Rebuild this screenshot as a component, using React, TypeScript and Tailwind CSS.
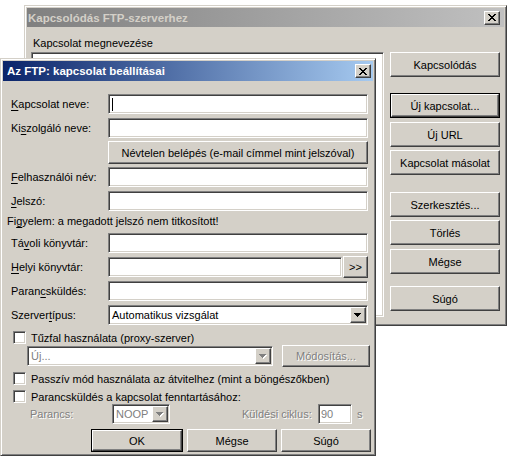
import React from "react";

const RAISED =
  "border border-t-white border-l-white border-r-[#404040] border-b-[#404040] shadow-[inset_-1px_-1px_#808080]";
const SUNKEN =
  "border border-t-[#808080] border-l-[#808080] border-r-white border-b-white shadow-[inset_1px_1px_#404040,inset_-1px_-1px_#d4d0c8] p-px";
const FRAME =
  "border border-t-[#d4d0c8] border-l-[#d4d0c8] border-r-[#404040] border-b-[#404040] shadow-[inset_1px_1px_#fff,inset_-1px_-1px_#808080]";
const DIS = "text-[#808080] [text-shadow:1px_1px_0_#fff]";

function CloseGlyph() {
  return (
    <svg width="8" height="7" viewBox="0 0 8 7" shapeRendering="crispEdges" fill="#000">
      <rect x="0" y="0" width="2" height="1" />
      <rect x="6" y="0" width="2" height="1" />
      <rect x="1" y="1" width="2" height="1" />
      <rect x="5" y="1" width="2" height="1" />
      <rect x="2" y="2" width="4" height="1" />
      <rect x="3" y="3" width="2" height="1" />
      <rect x="2" y="4" width="4" height="1" />
      <rect x="1" y="5" width="2" height="1" />
      <rect x="5" y="5" width="2" height="1" />
      <rect x="0" y="6" width="2" height="1" />
      <rect x="6" y="6" width="2" height="1" />
    </svg>
  );
}

function ArrowGlyph({ disabled = false }: { disabled?: boolean }) {
  const c = disabled ? "#808080" : "#000";
  const tri = (dx: number, dy: number, fill: string) => (
    <g fill={fill}>
      <rect x={0 + dx} y={0 + dy} width="7" height="1" />
      <rect x={1 + dx} y={1 + dy} width="5" height="1" />
      <rect x={2 + dx} y={2 + dy} width="3" height="1" />
      <rect x={3 + dx} y={3 + dy} width="1" height="1" />
    </g>
  );
  return (
    <svg width="8" height="5" viewBox="0 0 8 5" shapeRendering="crispEdges">
      {disabled && tri(1, 1, "#fff")}
      {tri(0, 0, c)}
    </svg>
  );
}

function TitleBar({
  title,
  active,
  className,
}: {
  title: string;
  active: boolean;
  className: string;
}) {
  return (
    <div
      className={`flex items-center shrink-0 ${className} ${
        active
          ? "bg-[linear-gradient(to_right,#0a246a,#a6caf0)] text-white"
          : "bg-[linear-gradient(to_right,#808080,#c0c0c0)] text-[#d4d0c8]"
      }`}
    >
      <span className="flex-1 font-bold text-[11.5px] leading-[14px] whitespace-nowrap">{title}</span>
      <div className={`${RAISED} bg-[#d4d0c8] w-[16px] h-[14px] flex items-center justify-center`}>
        <CloseGlyph />
      </div>
    </div>
  );
}

function Btn({
  children,
  className = "",
  disabled = false,
  def = false,
}: {
  children: React.ReactNode;
  className?: string;
  disabled?: boolean;
  def?: boolean;
}) {
  const inner = (
    <div
      className={`${RAISED} bg-[#d4d0c8] flex items-center justify-center w-full h-full whitespace-nowrap ${
        disabled ? DIS : ""
      }`}
    >
      {children}
    </div>
  );
  if (def) return <div className={`border border-black flex ${className}`}>{inner}</div>;
  return <div className={`flex ${className}`}>{inner}</div>;
}

function Check({ label, className = "" }: { label: React.ReactNode; className?: string }) {
  return (
    <div className={`flex items-center h-[13px] ml-[10px] ${className}`}>
      <div className={`${SUNKEN} w-[13px] h-[13px] bg-white shrink-0`} />
      <span className="ml-[5px] whitespace-nowrap">{label}</span>
    </div>
  );
}

function Combo({
  text,
  className = "",
  disabled = false,
}: {
  text: string;
  className?: string;
  disabled?: boolean;
}) {
  return (
    <div className={`${SUNKEN} bg-white flex items-center h-[20px] ${className}`}>
      <span className={`flex-1 pl-[2px] whitespace-nowrap overflow-hidden ${disabled ? "text-[#808080]" : ""}`}>
        {text}
      </span>
      <div className={`${RAISED} bg-[#d4d0c8] w-[16px] h-[16px] flex items-center justify-center shrink-0`}>
        <ArrowGlyph disabled={disabled} />
      </div>
    </div>
  );
}

function Row({
  label,
  className = "",
  children,
}: {
  label: React.ReactNode;
  className?: string;
  children: React.ReactNode;
}) {
  return (
    <div className={`flex items-center ${className}`}>
      <div className="w-[105px] pl-[8px] whitespace-nowrap">{label}</div>
      {children}
    </div>
  );
}

function U({ c }: { c: string }) {
  return <span className="underline underline-offset-[2px]">{c}</span>;
}

function Input({ className = "", children }: { className?: string; children?: React.ReactNode }) {
  return <div className={`${SUNKEN} bg-white h-[20px] flex items-center ${className}`}>{children}</div>;
}

function BgWindow() {
  return (
    <div
      className={`absolute left-[24px] top-[5px] w-[483px] h-[321px] bg-[#d4d0c8] ${FRAME} p-[2px] flex flex-col`}
    >
      <TitleBar title="Kapcsolódás FTP-szerverhez" active={false} className="h-[19px] pl-[1px] pr-[4px]" />
      <div className="flex">
        <div className="ml-[4px] w-[353px] flex flex-col pt-[9px]">
          <div className="pl-[2px] h-[14px] whitespace-nowrap">Kapcsolat megnevezése</div>
          <div className={`${SUNKEN} bg-white mt-[2px] h-[265px]`} />
        </div>
        <div className="ml-[6px] w-[110px] flex flex-col pt-[25px]">
          <Btn className="h-[25px]">Kapcsolódás</Btn>
          <Btn def className="h-[25px] mt-[16px]">Új kapcsolat...</Btn>
          <Btn className="h-[25px] mt-[4px]">Új URL</Btn>
          <Btn className="h-[25px] mt-[3px]">Kapcsolat másolat</Btn>
          <Btn className="h-[25px] mt-[17px]">Szerkesztés...</Btn>
          <Btn className="h-[25px] mt-[3px]">Törlés</Btn>
          <Btn className="h-[25px] mt-[4px]">Mégse</Btn>
          <Btn className="h-[25px] mt-[12px]">Súgó</Btn>
        </div>
      </div>
    </div>
  );
}

function FrontWindow() {
  return (
    <div
      className={`absolute left-0 top-[58px] w-[376px] h-[398px] bg-[#d4d0c8] ${FRAME} p-[2px] flex flex-col`}
    >
      <TitleBar title="Az FTP: kapcsolat beállításai" active className="h-[20px] pl-[4px] pr-[2px]" />
      <div className="flex flex-col">
        <Row className="h-[20px] mt-[13px]" label={<><U c="K" />apcsolat neve:</>}>
          <Input className="w-[260px]">
            <span className="ml-[2px] w-px h-[13px] bg-black" />
          </Input>
        </Row>
        <Row className="h-[20px] mt-[4px]" label={<>Ki<U c="s" />zolgáló neve:</>}>
          <Input className="w-[260px]" />
        </Row>
        <div className="flex mt-[3px] h-[23px]">
          <Btn className="ml-[105px] w-[260px] h-[23px]">Névtelen belépés (e-mail címmel mint jelszóval)</Btn>
        </div>
        <Row className="h-[20px] mt-[3px]" label={<><U c="F" />elhasználói név:</>}>
          <Input className="w-[260px]" />
        </Row>
        <Row className="h-[20px] mt-[4px]" label={<><U c="J" />elszó:</>}>
          <Input className="w-[260px]" />
        </Row>
        <div className="h-[14px] mt-[3px] pl-[4px] whitespace-nowrap">
          Fi<U c="g" />yelem: a megadott jelszó nem titkosított!
        </div>
        <Row className="h-[20px] mt-[5px]" label={<>Tá<U c="v" />oli könyvtár:</>}>
          <Input className="w-[260px]" />
        </Row>
        <Row className="h-[22px] mt-[3px]" label={<><U c="H" />elyi könyvtár:</>}>
          <Input className="w-[234px]" />
          <Btn className="ml-[1px] w-[25px] h-[22px]">&gt;&gt;</Btn>
        </Row>
        <Row className="h-[20px] mt-[3px]" label={<>Paran<U c="c" />sküldés:</>}>
          <Input className="w-[260px]" />
        </Row>
        <Row className="h-[20px] mt-[4px]" label={<>Szerver<U c="t" />ípus:</>}>
          <Combo text="Automatikus vizsgálat" className="w-[260px]" />
        </Row>
        <Check className="mt-[6px]" label="Tűzfal használata (proxy-szerver)" />
        <div className="flex items-center h-[22px] mt-[1px]">
          <Combo disabled text="Új..." className="ml-[24px] w-[246px]" />
          <Btn disabled className="ml-[9px] w-[88px] h-[22px]">Módosítás...</Btn>
        </div>
        <Check className="mt-[5px]" label="Passzív mód használata az átvitelhez (mint a böngészőkben)" />
        <Check className="mt-[5px]" label="Parancsküldés a kapcsolat fenntartásához:" />
        <div className="flex items-center h-[20px] mt-[1px]">
          <span className={`ml-[27px] w-[82px] ${DIS}`}>Parancs:</span>
          <Combo disabled text="NOOP" className="w-[58px]" />
          <span className={`ml-[72px] w-[76px] whitespace-nowrap ${DIS}`}>Küldési ciklus:</span>
          <Input className="w-[34px]">
            <span className="pl-[1px] text-[#808080]">90</span>
          </Input>
          <span className={`ml-[5px] ${DIS}`}>s</span>
        </div>
        <div className="flex h-[23px] mt-[5px]">
          <Btn def className="ml-[88px] w-[92px] h-[23px]">OK</Btn>
          <Btn className="ml-[4px] w-[90px] h-[23px]">Mégse</Btn>
          <Btn className="ml-[4px] w-[90px] h-[23px]">Súgó</Btn>
        </div>
      </div>
    </div>
  );
}

export default function App() {
  return (
    <div className="relative w-[510px] h-[468px] bg-white overflow-hidden font-['Liberation_Sans',Arial,sans-serif] text-[11px] leading-[14px] text-black">
      <BgWindow />
      <FrontWindow />
    </div>
  );
}
